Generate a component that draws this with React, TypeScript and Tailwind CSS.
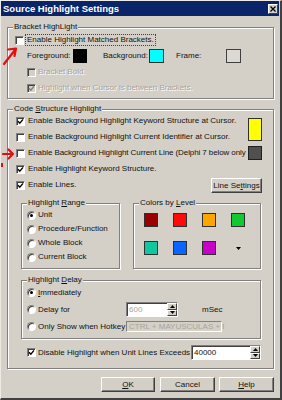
import React from 'react';

// Windows classic dialog: "Source Highlight Settings"

function CheckBox({ checked = false, disabled = false }: { checked?: boolean; disabled?: boolean }) {
  return (
    <span
      className={`inline-flex h-[9px] w-[9px] shrink-0 items-center justify-center border border-t-[#808080] border-l-[#808080] border-b-white border-r-white shadow-[inset_1px_1px_0_#404040] ${
        disabled ? 'bg-[#d4d0c8]' : 'bg-white'
      }`}
    >
      {checked && (
        <svg width="7" height="7" viewBox="0 0 7 7">
          <path d="M1 3.2 L2.8 5.2 L6 1.4" stroke={disabled ? '#808080' : '#000'} strokeWidth="1.4" fill="none" />
        </svg>
      )}
    </span>
  );
}

function Radio({ checked = false }: { checked?: boolean }) {
  return (
    <span className="inline-flex h-[9px] w-[9px] shrink-0 items-center justify-center rounded-full border border-t-[#808080] border-l-[#808080] border-b-white border-r-white bg-white shadow-[inset_1px_1px_0_#404040]">
      {checked && <span className="h-[3px] w-[3px] rounded-full bg-black" />}
    </span>
  );
}

function Group({ label, className, children }: { label: React.ReactNode; className: string; children?: React.ReactNode }) {
  return (
    <div className={`relative border border-[#808080] shadow-[inset_1px_1px_0_#fff,1px_1px_0_#fff] ${className}`}>
      <span className="absolute -top-[6px] left-[5px] bg-[#d4d0c8] px-[1px] leading-[10px]">{label}</span>
      {children}
    </div>
  );
}

function SpinArrows() {
  return (
    <span className="flex h-full w-[10px] shrink-0 flex-col">
      <span className="flex flex-1 items-center justify-center border border-t-white border-l-white border-b-[#404040] border-r-[#404040] bg-[#d4d0c8]">
        <svg width="5" height="3" viewBox="0 0 5 3"><path d="M0 3 L2.5 0 L5 3 Z" fill="#000" /></svg>
      </span>
      <span className="flex flex-1 items-center justify-center border border-t-white border-l-white border-b-[#404040] border-r-[#404040] bg-[#d4d0c8]">
        <svg width="5" height="3" viewBox="0 0 5 3"><path d="M0 0 L2.5 3 L5 0 Z" fill="#000" /></svg>
      </span>
    </span>
  );
}

function Button({ children, className }: { children: React.ReactNode; className: string }) {
  return (
    <div
      className={`flex h-[15px] items-center justify-center border border-t-white border-l-white border-b-[#404040] border-r-[#404040] bg-[#d4d0c8] shadow-[inset_-1px_-1px_0_#808080] ${className}`}
    >
      {children}
    </div>
  );
}

const disabledText = 'text-[#a8a49c] [text-shadow:1px_1px_0_#fff]';

export default function App() {
  return (
    <div className="relative h-[400px] w-[282px] overflow-hidden whitespace-nowrap border-l border-t border-b-2 border-r-2 border-l-[#ecebe6] border-t-[#ecebe6] border-b-[#404040] border-r-[#404040] bg-[#d4d0c8] font-['Liberation_Sans',Arial,sans-serif] text-[8px] leading-[10px] text-[#101010]">
      {/* タイトルバー */}
      <div className="mr-[1px] flex h-[15px] items-center justify-between bg-[#0a246a] pl-[2px] pr-[1px]">
        <span className="text-[9.5px] font-bold text-white">Source Highlight Settings</span>
        <span className="flex h-[10px] w-[10px] items-center justify-center border border-t-white border-l-white border-b-[#404040] border-r-[#404040] bg-[#d4d0c8]">
          <svg width="6" height="6" viewBox="0 0 6 6">
            <path d="M0.5 0.5 L5.5 5.5 M5.5 0.5 L0.5 5.5" stroke="#000" strokeWidth="1.3" />
          </svg>
        </span>
      </div>

      <div className="mx-[6px]">
        {/* Bracket HighLight */}
        <Group label="Bracket HighLight" className="mt-[11px] h-[72px] w-[267px] pl-[7px] pt-[4px]">
          <div className="flex h-[16px] items-center">
            <CheckBox />
            <span className="ml-[2px] px-[1px] outline outline-1 outline-dotted outline-[#404040]">Enable Highlight Matched Brackets.</span>
          </div>
          <div className="ml-[12px] flex h-[16px] items-center">
            <span className="w-[46px]">Foreground:</span>
            <span className="h-[14px] w-[14px] bg-[#000]" />
            <span className="ml-[16px] w-[46px]">Background:</span>
            <span className="h-[14px] w-[15px] border border-[#303030] bg-[#00ffff]" />
            <span className="ml-[12px] w-[50px]">Frame:</span>
            <span className="h-[14px] w-[15px] border border-[#404040] bg-[#dcd8d4]" />
          </div>
          <div className="ml-[12px] flex h-[16px] items-center">
            <CheckBox disabled />
            <span className={`ml-[2px] ${disabledText}`}>Bracket Bold.</span>
          </div>
          <div className="ml-[12px] flex h-[16px] items-center">
            <CheckBox checked disabled />
            <span className={`ml-[2px] ${disabledText}`}>Highlight when Cursor is between Brackets.</span>
          </div>
        </Group>

        {/* Code Structure Highlight */}
        <Group
          label={<>Code <u>S</u>tructure Highlight</>}
          className="mt-[10px] h-[260px] w-[267px] pl-[8px] pr-[11px] pt-[3px]"
        >
          <div className="flex items-center">
            <div className="flex-1">
              <div className="flex h-[16px] items-center">
                <CheckBox checked />
                <span className="ml-[3px]">Enable Background Highlight Keyword Structure at Cursor.</span>
              </div>
              <div className="flex h-[16px] items-center">
                <CheckBox />
                <span className="ml-[3px]">Enable Background Highlight Current Identifier at Cursor.</span>
              </div>
            </div>
            <span className="h-[23px] w-[14px] border border-[#303030] bg-[#ffff00]" />
          </div>
          <div className="flex h-[16px] items-center">
            <CheckBox />
            <span className="ml-[3px] flex-1 tracking-[-0.1px]">Enable Background Highlight Current Line (Delphi 7 below only</span>
            <span className="h-[14px] w-[14px] shrink-0 border border-[#202020] bg-[#505050]" />
          </div>
          <div className="flex h-[16px] items-center">
            <CheckBox checked />
            <span className="ml-[3px]">Enable Highlight Keyword Structure.</span>
          </div>
          <div className="flex h-[16px] items-center">
            <CheckBox checked />
            <span className="ml-[3px] flex-1">Enable Lines.</span>
            <Button className="mt-[1px] w-[51px]">
              <span>Line Se<u>t</u>tings</span>
            </Button>
          </div>

          <div className="mt-[10px] flex">
            <Group label={<>Highlight <u>R</u>ange</>} className="ml-[5px] h-[66px] w-[99px] pl-[5px] pt-[4px]">
              <div className="flex h-[14px] items-center">
                <Radio checked />
                <span className="ml-[2px]">Unit</span>
              </div>
              <div className="flex h-[14px] items-center">
                <Radio />
                <span className="ml-[2px]">Procedure/Function</span>
              </div>
              <div className="flex h-[14px] items-center">
                <Radio />
                <span className="ml-[2px]">Whole Block</span>
              </div>
              <div className="flex h-[14px] items-center">
                <Radio />
                <span className="ml-[2px]">Current Block</span>
              </div>
            </Group>
            <Group label={<>Colors by <u>L</u>evel</>} className="ml-[13px] h-[66px] w-[128px] pl-[10px] pt-[9px]">
              <div className="flex gap-[15px]">
                <span className="h-[14px] w-[14px] border border-[#303030] bg-[#9a0000]" />
                <span className="h-[14px] w-[14px] border border-[#303030] bg-[#ff0a0a]" />
                <span className="h-[14px] w-[14px] border border-[#303030] bg-[#ffa500]" />
                <span className="h-[14px] w-[14px] border border-[#303030] bg-[#12c832]" />
              </div>
              <div className="mt-[14px] flex gap-[15px]">
                <span className="h-[14px] w-[14px] border border-[#303030] bg-[#10c8a0]" />
                <span className="h-[14px] w-[14px] border border-[#303030] bg-[#0a64ff]" />
                <span className="h-[14px] w-[14px] border border-[#303030] bg-[#c800c8]" />
                <span className="flex h-[14px] w-[14px] items-center justify-center">
                  <svg width="5" height="3" viewBox="0 0 5 3"><path d="M0 0 L2.5 3 L5 0 Z" fill="#000" /></svg>
                </span>
              </div>
            </Group>
          </div>

          <Group label={<>Highlight <u>D</u>elay</>} className="ml-[5px] mt-[11px] h-[59px] w-[240px] pl-[5px] pt-[3px]">
            <div className="flex h-[17px] items-center">
              <Radio checked />
              <span className="ml-[2px]"><u>I</u>mmediately</span>
            </div>
            <div className="flex h-[17px] items-center">
              <Radio />
              <span className="ml-[2px] w-[88px]">Delay for</span>
              <span className="flex h-[15px] w-[52px] items-stretch border border-t-[#808080] border-l-[#808080] border-b-white border-r-white bg-white shadow-[inset_1px_1px_0_#404040]">
                <span className="flex flex-1 items-center pl-[2px] text-[#a8a49c]">600</span>
                <SpinArrows />
              </span>
              <span className="ml-[24px]">mSec</span>
            </div>
            <div className="flex h-[17px] items-center">
              <Radio />
              <span className="ml-[2px] w-[88px]">Only Show when Hotkey</span>
              <span className="flex h-[11px] w-[96px] items-center border border-t-[#808080] border-l-[#808080] border-b-white border-r-white bg-[#d4d0c8] pl-[2px] text-[#a8a49c]">
                CTRL + MAYUSCULAS + I
              </span>
            </div>
          </Group>

          <div className="ml-[11px] mt-[6px] flex h-[15px] items-center">
            <CheckBox checked />
            <span className="ml-[2px] w-[153px]">Disable Highlight when Unit Lines Exceeds</span>
            <span className="flex h-[15px] w-[70px] items-stretch border border-t-[#808080] border-l-[#808080] border-b-white border-r-white bg-white shadow-[inset_1px_1px_0_#404040]">
              <span className="flex flex-1 items-center pl-[2px]">40000</span>
              <SpinArrows />
            </span>
          </div>
        </Group>

        {/* ボタン */}
        <div className="mt-[8px] flex justify-end">
          <Button className="w-[54px]"><u>O</u>K</Button>
          <Button className="ml-[5px] w-[55px]">Cancel</Button>
          <Button className="ml-[4px] w-[55px]"><u>H</u>elp</Button>
        </div>
      </div>

      {/* 赤い手書き矢印（スクリーンショット上の注記） */}
      <svg className="absolute left-0 top-[44px]" width="18" height="22" viewBox="0 0 18 22">
        <path d="M3 19 L14 5 M7 4.5 L15 3.5 L13.5 11" stroke="#e01010" strokeWidth="2.2" fill="none" strokeLinecap="round" strokeLinejoin="round" />
      </svg>
      <svg className="absolute left-0 top-[146px]" width="16" height="14" viewBox="0 0 16 14">
        <path d="M2 7 L12 7 M7.5 2.5 L12 7 L7.5 11.5" stroke="#e01010" strokeWidth="2.2" fill="none" strokeLinecap="round" strokeLinejoin="round" />
      </svg>
      <span className="absolute left-0 top-[162px] h-[4px] w-[2px] bg-[#e01010]" />
    </div>
  );
}
